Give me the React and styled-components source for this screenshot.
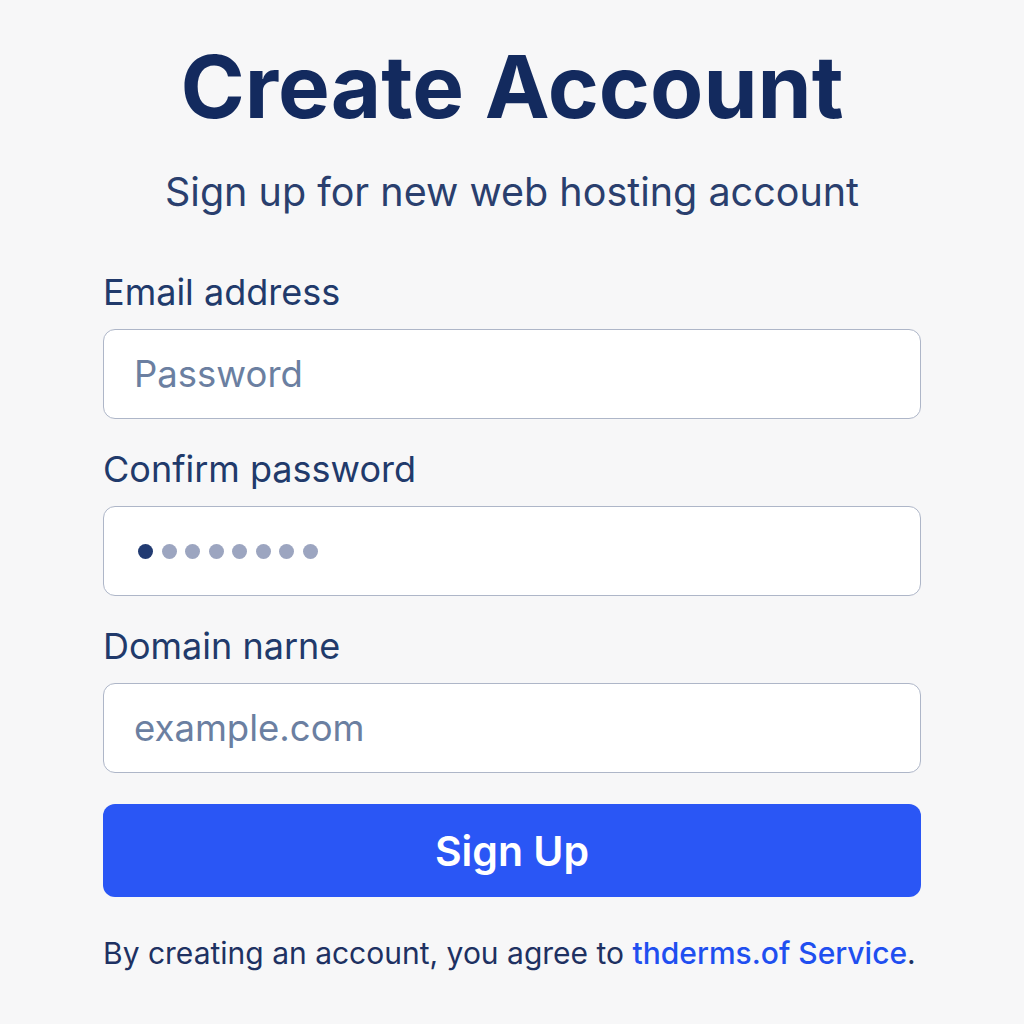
import React from "react";
import styled, { createGlobalStyle } from "styled-components";

const Global = createGlobalStyle`
  html, body { margin: 0; padding: 0; background: #f7f7f8; }
  body { font-family: Inter, "Noto Sans", sans-serif; }
`;

const Page = styled.div`
  width: 1024px;
  height: 1024px;
  box-sizing: border-box;
  padding: 37px 103px 0;
  display: flex;
  flex-direction: column;
  background: #f7f7f8;
`;

const Title = styled.h1`
  margin: 0;
  text-align: center;
  font-size: 87px;
  line-height: 100px;
  font-weight: 700;
  color: #132a5e;
`;

const Subtitle = styled.p`
  margin: 30px 0 0;
  text-align: center;
  font-size: 39.5px;
  line-height: 50px;
  font-weight: 400;
  color: #2a3f6e;
`;

const Form = styled.form`
  margin-top: 54px;
  display: flex;
  flex-direction: column;
`;

const Field = styled.div`
  display: flex;
  flex-direction: column;
  margin-bottom: ${(p) => p.$gap || 29}px;
`;

const Label = styled.label`
  font-size: 36px;
  line-height: 42px;
  color: #213a6b;
  margin-bottom: 16px;
`;

const InputBox = styled.div`
  height: 90px;
  box-sizing: border-box;
  border: 1.5px solid #aeb6c8;
  border-radius: 12px;
  background: #ffffff;
  display: flex;
  align-items: center;
  padding: 0 30px;
`;

const Placeholder = styled.span`
  font-size: 36.5px;
  color: #6b7fa1;
`;

const Dots = styled.div`
  display: flex;
  gap: 8.5px;
  margin-left: 4px;
`;

const Dot = styled.span`
  width: 15px;
  height: 15px;
  border-radius: 50%;
  background: ${(p) => (p.$active ? "#223b72" : "#9ca5c0")};
`;

const Button = styled.button`
  height: 93px;
  border: none;
  border-radius: 12px;
  background: #2a56f5;
  color: #ffffff;
  font-family: Inter, "Noto Sans", sans-serif;
  font-size: 41px;
  font-weight: 600;
  cursor: pointer;
`;

const Footer = styled.p`
  margin: 36px 0 0;
  font-size: 30px;
  line-height: 40px;
  color: #1e3162;
  white-space: nowrap;
`;

const Link = styled.a`
  color: #1f4ff0;
  font-weight: 500;
  text-decoration: none;
`;

export default function App() {
  return (
    <>
      <Global />
      <Page>
        <Title>Create Account</Title>
        <Subtitle>Sign up for new web hosting account</Subtitle>
        <Form onSubmit={(e) => e.preventDefault()}>
          <Field>
            <Label>Email address</Label>
            <InputBox>
              <Placeholder>Password</Placeholder>
            </InputBox>
          </Field>
          <Field>
            <Label>Confirm password</Label>
            <InputBox>
              <Dots>
                {Array.from({ length: 8 }).map((_, i) => (
                  <Dot key={i} $active={i === 0} />
                ))}
              </Dots>
            </InputBox>
          </Field>
          <Field $gap={31}>
            <Label>Domain narne</Label>
            <InputBox>
              <Placeholder>example.com</Placeholder>
            </InputBox>
          </Field>
          <Button type="submit">Sign Up</Button>
        </Form>
        <Footer>
          By creating an account, you agree to <Link href="#">thderms.of Service</Link>.
        </Footer>
      </Page>
    </>
  );
}
